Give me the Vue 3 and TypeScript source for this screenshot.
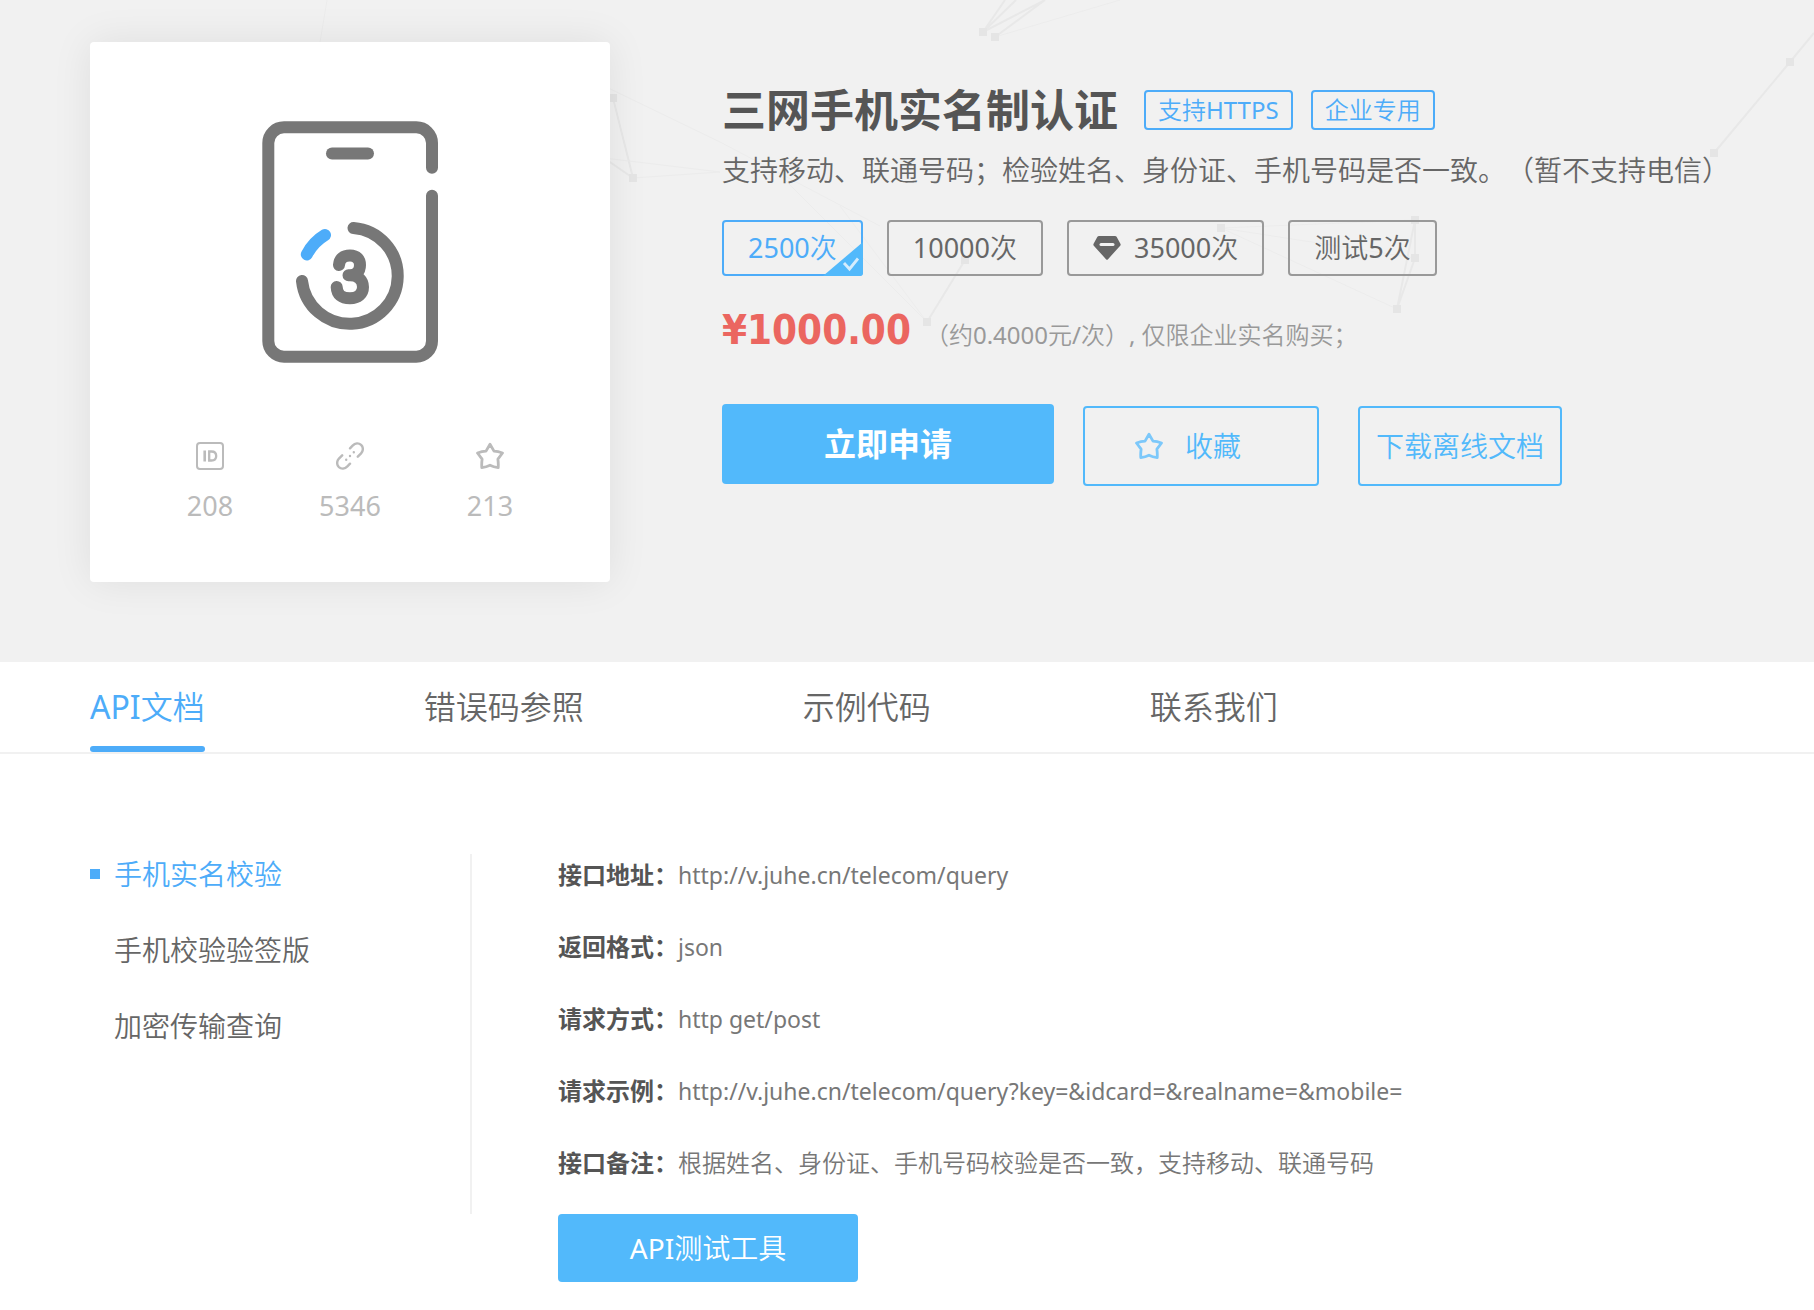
<script setup lang="ts">
import { ref } from 'vue'

interface Plan {
  label: string
  vip?: boolean
}

interface Row {
  label: string
  value: string
}

const tags: string[] = ['支持HTTPS', '企业专用']
const plans: Plan[] = [
  { label: '2500次' },
  { label: '10000次' },
  { label: '35000次', vip: true },
  { label: '测试5次' },
]
const tabs: string[] = ['API文档', '错误码参照', '示例代码', '联系我们']
const apis: string[] = ['手机实名校验', '手机校验验签版', '加密传输查询']
const rows: Row[] = [
  { label: '接口地址：', value: 'http://v.juhe.cn/telecom/query' },
  { label: '返回格式：', value: 'json' },
  { label: '请求方式：', value: 'http get/post' },
  { label: '请求示例：', value: 'http://v.juhe.cn/telecom/query?key=&idcard=&realname=&mobile=' },
  { label: '接口备注：', value: '根据姓名、身份证、手机号码校验是否一致，支持移动、联通号码' },
]

// Decorative constellation behind the product header: x, y of each node
const nodes: number[][] = [
  [613, 98], [633, 178], [983, 32], [995, 37], [1790, 62], [1714, 153],
  [1221, 228], [1415, 220], [1415, 258], [1397, 309], [965, 260], [927, 322],
]

const activePlan = ref(0)
const activeTab = ref(0)
const activeApi = ref(0)
</script>

<template>
  <div class="page">
    <header class="hero">
      <svg class="mesh" viewBox="0 0 1814 662" preserveAspectRatio="xMidYMin slice" aria-hidden="true">
        <g fill="none" stroke="#e8e8e8" stroke-width="2">
          <path d="M613 98L633 178L604 158M1714 153L1790 62L1814 33M1415 220L1397 309L1415 258V220M965 260L927 322M1005 0L983 32L1045 0L995 37M1016 0L983 32" />
        </g>
        <g fill="none" stroke="#ececec" stroke-width="1">
          <path d="M327 0L320 42M600 84L720 142L880 226M604 158L720 172L633 178M1221 228L1415 220M1221 228L1397 309M1221 228L1415 258M780 175L927 322M995 37L1120 0M840 206L927 322" />
        </g>
        <rect v-for="(n, i) in nodes" :key="i" :x="n[0] - 4" :y="n[1] - 4" width="8" height="8" fill="#e5e5e5" />
      </svg>

      <section class="card">
        <svg class="logo" width="176" height="242" viewBox="0 0 176 242" fill="none" stroke="#777" stroke-width="12" stroke-linecap="round" aria-hidden="true">
          <path d="M170 46.7V22a15.7 15.7 0 0 0-15.7-15.7H22A15.7 15.7 0 0 0 6.3 22v198A15.7 15.7 0 0 0 22 235.7h132.3A15.7 15.7 0 0 0 170 220V74.7" />
          <path d="M70 32.5h36" />
          <path d="M91.5 107A48 48 0 1 1 40 160" />
          <path d="M44.8 133.5A48 48 0 0 1 63 114" stroke="#4dacf9" />
          <path stroke-linejoin="round" d="M77 144C77.500 137.500 81.500 134.500 88 134.500C95 134.500 98 138.500 98 144C98 150.500 94 154.300 88 154.300H86.500H88C96.500 154.300 101 159.500 101 166C101 173 96 177.300 88 177.300C79.500 177.300 75 173.500 74.700 166" />
        </svg>
        <ul class="stats">
          <li>
            <svg width="28" height="28" viewBox="0 0 28 28" fill="none" stroke="#bbb" stroke-width="2" aria-hidden="true">
              <rect x="1" y="1" width="26" height="26" rx="3" />
              <path d="M8.700 8.500v11" stroke-width="2.600" />
              <path d="M13.200 9.500v9h2.300c3.200 0 4.700-1.600 4.700-4.500s-1.500-4.500-4.700-4.500z" stroke-width="2.300" />
            </svg>
            <span>208</span>
          </li>
          <li>
            <svg width="28" height="28" viewBox="0 0 28 28" fill="none" stroke="#bbb" stroke-width="2.400" stroke-linecap="round" aria-hidden="true">
              <path d="M14 6.300l2.600-2.700c2.500-2.500 6-2.800 8.500-.7c2.400 2.300 2.300 6 0 8.400l-3.300 3.400M6.200 13.300l-3.300 3.400c-2.300 2.400-2.400 6.100 0 8.400c2.500 2.100 6 1.800 8.500-.7l2.600-2.700" />
              <path d="M10.200 17.800h.01M14 14h.01M17.800 10.200h.01" />
            </svg>
            <span>5346</span>
          </li>
          <li>
            <svg width="28" height="28" viewBox="0 0 28 28" fill="none" stroke="#bbb" stroke-width="2.800" stroke-linejoin="round" aria-hidden="true">
              <path d="M14 2.200L18 9.100Q22 9.300 26.500 11L21.900 17.200Q22.500 21.500 22.200 25.600Q17.500 25 14 23.200Q10.500 25 5.800 25.600Q5.500 21.500 6.100 17.200L1.500 11Q6 9.300 10 9.100Z" />
            </svg>
            <span>213</span>
          </li>
        </ul>
      </section>

      <section class="info">
        <div class="heading">
          <h1>三网手机实名制认证</h1>
          <div class="tags">
            <span v-for="t in tags" :key="t" class="tag">{{ t }}</span>
          </div>
        </div>
        <p class="desc">支持移动、联通号码；检验姓名、身份证、手机号码是否一致。（暂不支持电信）</p>
        <div class="plans">
          <button
            v-for="(p, i) in plans"
            :key="p.label"
            type="button"
            class="plan"
            :class="{ active: i === activePlan }"
            :aria-pressed="i === activePlan"
            @click="activePlan = i"
          >
            <svg v-if="p.vip" width="28" height="24" viewBox="0 0 28 24" aria-hidden="true">
              <path fill="#666" d="M6 0h16q1 0 1.600.8l3.800 7q.6 1-.2 1.900L15 23.200q-1 1-2 0L.8 9.700q-.8-.9-.2-1.900l3.800-7Q5 0 6 0z" />
              <path d="M8 8.500h12" stroke="#f1f1f1" stroke-width="3" stroke-linecap="round" />
            </svg>
            {{ p.label }}
            <svg v-if="i === activePlan" class="corner" width="40" height="34" viewBox="0 0 40 34" aria-hidden="true">
              <path fill="#52b9fb" d="M40 0v31a3 3 0 0 1-3 3H0z" />
              <path d="M21 21l5.500 6L35 16.500" fill="none" stroke="#d5edfd" stroke-width="2.800" />
            </svg>
          </button>
        </div>
        <p class="price">
          <strong>¥1000.00</strong>
          <span>（约0.4000元/次）, 仅限企业实名购买；</span>
        </p>
        <div class="actions">
          <button type="button" class="apply">立即申请</button>
          <button type="button" class="outline favorite">
            <svg width="28" height="28" viewBox="0 0 28 28" fill="none" stroke="#7cc8fa" stroke-width="2.800" stroke-linejoin="round" aria-hidden="true">
              <path d="M14 2.200L18 9.100Q22 9.300 26.500 11L21.900 17.200Q22.500 21.500 22.200 25.600Q17.500 25 14 23.200Q10.500 25 5.800 25.600Q5.500 21.500 6.100 17.200L1.500 11Q6 9.300 10 9.100Z" />
            </svg>
            收藏
          </button>
          <button type="button" class="outline download">下载离线文档</button>
        </div>
      </section>
    </header>

    <nav class="tabs">
      <a
        v-for="(t, i) in tabs"
        :key="t"
        href="#"
        :class="{ active: i === activeTab }"
        @click.prevent="activeTab = i"
      >{{ t }}</a>
    </nav>

    <main class="docs">
      <nav class="side">
        <a
          v-for="(a, i) in apis"
          :key="a"
          href="#"
          :class="{ active: i === activeApi }"
          @click.prevent="activeApi = i"
        >{{ a }}</a>
      </nav>
      <section class="detail">
        <dl>
          <div v-for="r in rows" :key="r.label" class="row">
            <dt>{{ r.label }}</dt>
            <dd :class="{ latin: r.value.startsWith('http') || r.value === 'json' }">{{ r.value }}</dd>
          </div>
        </dl>
        <button type="button" class="tool">API测试工具</button>
      </section>
    </main>
  </div>
</template>

<style>
body {
  margin: 0;
  background: #fff;
}
</style>

<style scoped>
.page {
  font-family: "Noto Sans", "Noto Sans CJK SC DemiLight", "Noto Sans CJK SC", sans-serif;
  font-size: 28px;
  line-height: 40px;
  color: #666;
  text-spacing-trim: space-all;
}

h1,
p,
ul,
dl,
dd {
  margin: 0;
  padding: 0;
}

button {
  box-sizing: border-box;
  margin: 0;
  font: inherit;
  border-radius: 4px;
  cursor: pointer;
}

h1,
dt,
.apply {
  font-family: "Noto Sans", "Noto Sans CJK SC", sans-serif;
}

a {
  color: inherit;
  text-decoration: none;
}

.hero {
  position: relative;
  display: flex;
  align-items: flex-start;
  gap: 112px;
  padding: 42px 48px 80px 90px;
  background: #f1f1f1;
}

.mesh {
  position: absolute;
  inset: 0;
  width: 100%;
  height: 100%;
}

.card {
  position: relative;
  flex: none;
  box-sizing: border-box;
  display: flex;
  flex-direction: column;
  align-items: center;
  width: 520px;
  height: 540px;
  padding-top: 79px;
  background: #fff;
  border-radius: 4px;
  box-shadow: 0 0 40px rgba(0, 0, 0, 0.08);
}

.stats {
  display: flex;
  margin-top: 79px;
  list-style: none;
  font-size: 27px;
  color: #bbb;
}

.stats li {
  display: flex;
  flex-direction: column;
  align-items: center;
  gap: 16px;
  width: 140px;
}

.info {
  position: relative;
  min-width: 0;
  padding-top: 36px;
}

.heading {
  display: flex;
  align-items: center;
  gap: 26px;
}

h1 {
  font-size: 44px;
  line-height: 64px;
  font-weight: 700;
  color: #555;
}

.tags {
  display: flex;
  gap: 18px;
}

.tag {
  padding: 0 12px;
  border: 2px solid #4dacf9;
  border-radius: 4px;
  font-size: 24px;
  line-height: 36px;
  color: #4dacf9;
}

.desc {
  margin-top: 8px;
}

.plans {
  display: flex;
  gap: 24px;
  margin-top: 30px;
}

.plan {
  position: relative;
  display: flex;
  align-items: center;
  gap: 13px;
  height: 56px;
  padding: 0 24px;
  border: 2px solid #999;
  background: none;
  font-size: 27px;
  color: #666;
}

.plan.active {
  border-color: #4dacf9;
  color: #4dacf9;
}

.corner {
  position: absolute;
  right: -2px;
  bottom: -2px;
}

.price {
  display: flex;
  align-items: baseline;
  gap: 14px;
  margin-top: 30px;
  font-size: 24px;
  line-height: 48px;
  color: #999;
}

.price strong {
  font-family: "DejaVu Sans Condensed", "DejaVu Sans", sans-serif;
  font-size: 40px;
  color: #eb6660;
}

.actions {
  display: flex;
  align-items: flex-end;
  margin-top: 45px;
}

.apply {
  width: 332px;
  height: 80px;
  margin-bottom: 2px;
  border: 0;
  background: #52b9fb;
  font-size: 32px;
  font-weight: 700;
  color: #fff;
}

.outline {
  height: 80px;
  border: 2px solid #52b9fb;
  background: none;
  color: #52b9fb;
}

.favorite {
  display: flex;
  align-items: center;
  gap: 22px;
  width: 236px;
  margin-left: 29px;
  padding: 0 50px;
}

.download {
  margin-left: 39px;
  padding: 0 16px;
}

.tabs {
  display: flex;
  gap: 219px;
  padding: 0 90px;
  border-bottom: 2px solid #f1f1f1;
  font-size: 32px;
}

.tabs a {
  position: relative;
  padding: 25px 0;
}

.tabs a.active {
  color: #4dacf9;
}

.tabs a.active::after {
  content: "";
  position: absolute;
  right: 0;
  bottom: 0;
  left: 0;
  height: 6px;
  border-radius: 3px;
  background: #4dacf9;
}

.docs {
  display: flex;
  align-items: flex-start;
  padding: 85px 90px 28px;
}

.side {
  flex: none;
  box-sizing: border-box;
  display: flex;
  flex-direction: column;
  gap: 36px;
  width: 382px;
  height: 360px;
  margin-top: 15px;
  border-right: 2px solid #f1f1f1;
}

.side a {
  display: flex;
  align-items: center;
  gap: 14px;
}

.side a::before {
  content: "";
  width: 10px;
  height: 10px;
}

.side a.active {
  color: #4dacf9;
}

.side a.active::before {
  background: #4dacf9;
}

.detail {
  padding-left: 86px;
}

.row {
  display: flex;
  font-size: 24px;
  line-height: 72px;
}

dt {
  font-weight: 700;
  color: #555;
}

dd {
  color: #777;
}

.latin {
  font-size: 23px;
}

.tool {
  width: 300px;
  height: 68px;
  margin-top: 15px;
  border: 0;
  background: #52b9fb;
  color: #fff;
}
</style>
